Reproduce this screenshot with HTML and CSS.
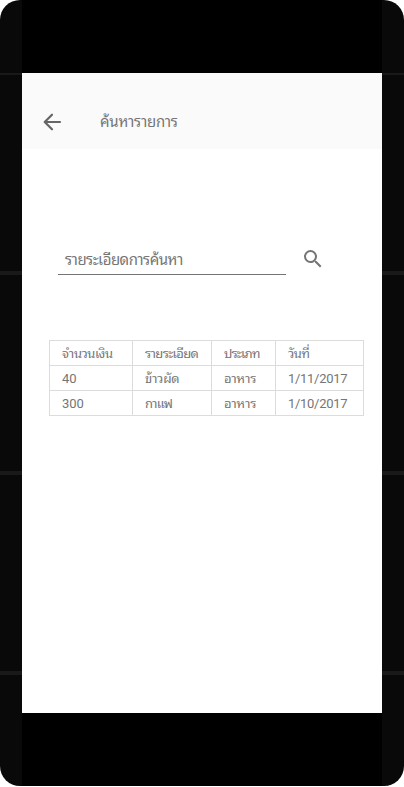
FILE: index.html
```html
<!DOCTYPE html>
<html lang="th">
<head>
<meta charset="utf-8">
<title>ค้นหารายการ</title>
<link rel="stylesheet" href="styles.css">
</head>
<body>
<div class="device">
  <main class="screen">
    <header class="toolbar">
      <svg class="icon icon-back" viewBox="0 0 24 24"><path d="M20 12H5M12 4.7L4.7 12l7.3 7.3"/></svg>
      <h1 class="title">ค้นหารายการ</h1>
    </header>
    <div class="search">
      <div class="field"><span class="placeholder">รายระเอียดการค้นหา</span></div>
      <svg class="icon icon-search" viewBox="0 0 24 24"><path d="M15.5 14h-.79l-.28-.27A6.47 6.47 0 0 0 16 9.5 6.5 6.5 0 1 0 9.5 16c1.61 0 3.09-.59 4.23-1.57l.27.28v.79l5 4.99L20.49 19l-4.99-5zm-6 0C7.01 14 5 11.99 5 9.5S7.01 5 9.5 5 14 7.01 14 9.5 11.99 14 9.5 14z"/></svg>
    </div>
    <table class="results">
      <colgroup><col class="c-amount"><col class="c-detail"><col class="c-type"><col class="c-date"></colgroup>
      <tr class="head"><td>จำนวนเงิน</td><td class="detail">รายระเอียด</td><td class="type">ประเภท</td><td>วันที่</td></tr>
      <tr><td>40</td><td class="thai">ข้าวผัด</td><td class="thai">อาหาร</td><td class="date">1/11/2017</td></tr>
      <tr><td>300</td><td class="coffee">กาแฟ</td><td class="thai">อาหาร</td><td class="date">1/10/2017</td></tr>
    </table>
  </main>
</div>
</body>
</html>
```
FILE: styles.css
```css
* { box-sizing: border-box; }
body { margin: 0; background: #fff; font-family: Roboto, "Noto Sans Thai Looped", "Noto Looped Thai", Loma, Waree, Garuda, "Noto Sans Thai", "Noto Sans", sans-serif; color: #757575; }
.device {
  width: 404px; height: 786px; padding: 73px 22px; border-radius: 20px;
  background:
    linear-gradient(#000, #000) 22px 0 / 360px 786px no-repeat,
    linear-gradient(#191919, #191919) 0 73px / 404px 2px no-repeat,
    linear-gradient(#191919, #191919) 0 271px / 404px 4px no-repeat,
    linear-gradient(#191919, #191919) 0 471px / 404px 4px no-repeat,
    linear-gradient(#191919, #191919) 0 671px / 404px 4px no-repeat,
    #090909;
}
.screen { width: 360px; height: 640px; background: #fff; overflow: hidden; }
.toolbar { height: 76px; padding: 24px 0 2px 18px; display: flex; align-items: center; background: #fafafa; }
.icon { display: block; flex: none; width: 24px; height: 24px; }
.icon-back { fill: none; stroke: #666; stroke-width: 2.2; stroke-linecap: round; stroke-linejoin: round; }
.title { margin: 0 0 0 36px; font-size: 15px; font-weight: 400; line-height: 24px; letter-spacing: -.25px; white-space: nowrap; }
.search { display: flex; margin: 94px 0 0 36px; height: 32px; }
.field { width: 228px; height: 32px; padding: 5px 6px 2px 7px; border-bottom: 1px solid #757575; font-size: 15px; line-height: 24px; letter-spacing: -.5px; white-space: nowrap; }
.icon-search { margin: 4px 0 0 15px; fill: #757575; }
.results { width: 315px; margin: 65px 0 0 27px; table-layout: fixed; border-collapse: collapse; font-size: 13px; line-height: 22px; }
.results td { height: 25px; padding: 2px 0 0 12px; border: 1px solid #dcdcdc; white-space: nowrap; }
.head td { letter-spacing: -.45px; }
.head .detail { letter-spacing: -.65px; }
.head .type { letter-spacing: -.85px; }
.results .thai { letter-spacing: -.2px; }
.results .coffee { letter-spacing: -.8px; }
.results .date { letter-spacing: -.3px; }
.c-amount { width: 83px; }
.c-detail { width: 79px; }
.c-type { width: 64px; }
.c-date { width: 88px; }
```
